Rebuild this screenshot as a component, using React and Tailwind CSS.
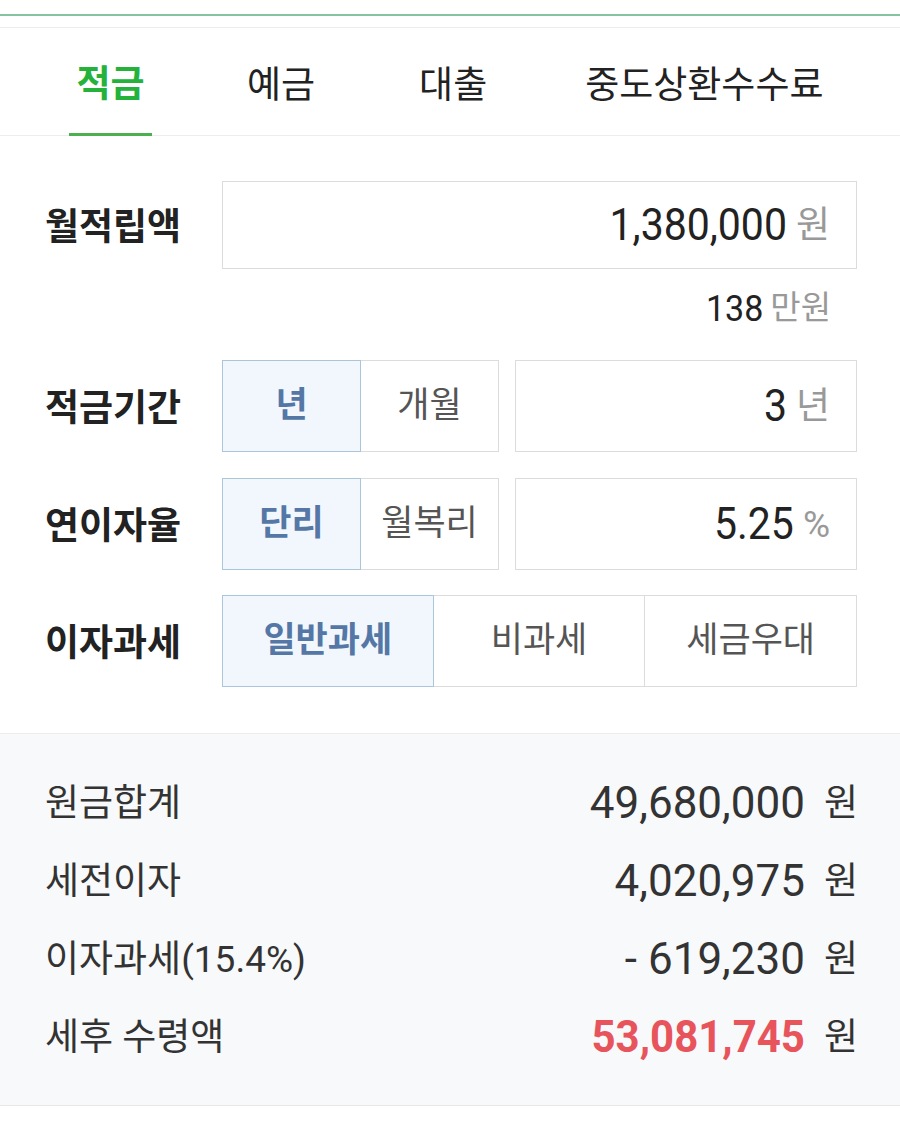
import React from "react";

const KR = { fontFamily: "Roboto, 'Noto Sans CJK KR', sans-serif" };

function Label({ children }) {
  return (
    <div className="w-[177px] shrink-0 pt-[4px] text-[37px] font-bold text-[#222] leading-none">
      {children}
    </div>
  );
}

function Toggle({ a, b }) {
  return (
    <div className="flex w-[277px] h-full">
      <div className="w-[139px] h-full flex items-center justify-center border border-[#a9c6da] bg-[#f1f7fd] text-[35px] font-bold text-[#5577a6]">
        {a}
      </div>
      <div className="flex-1 h-full flex items-center justify-center border border-l-0 border-[#dcdcdc] bg-white text-[35px] text-[#555]">
        {b}
      </div>
    </div>
  );
}

function ValueBox({ value, unit, className = "" }) {
  return (
    <div className={"h-full flex items-center justify-end border border-[#dcdcdc] bg-white pr-[26px] " + className}>
      <span className="inline-block text-[41px] text-[#222] leading-none scale-y-[1.1]">{value}</span>
      <span className="inline-block ml-[9px] text-[37px] text-[#999] leading-none">{unit}</span>
    </div>
  );
}

function ResultRow({ label, value, red }) {
  return (
    <div className="h-[78px] flex items-center justify-between">
      <span className="text-[37px] text-[#333] leading-none">{label}</span>
      <span className="flex items-center">
        <span
          className={
            "inline-block leading-none " +
            (red ? "text-[42px] text-[#e8545b] font-bold scale-y-[1.06]" : "text-[44px] text-[#333]")
          }
        >
          {value}
        </span>
        <span className="ml-[19px] text-[37px] text-[#333] leading-none">원</span>
      </span>
    </div>
  );
}

export default function App() {
  return (
    <div className="w-[900px] h-[1121px] bg-white overflow-hidden" style={KR}>
      <div className="h-[14px]" />
      <div className="h-[2px] bg-[#86c4a1]" />
      <div className="h-[11px]" />
      <div className="h-px bg-[#ececec]" />

      {/* Tabs */}
      <div className="h-[108px] flex items-stretch border-b border-[#ececec] pl-[69px]">
        <div className="w-[83px] flex items-center justify-center border-b-[3px] border-[#4caf50] -mb-px pt-[8px] text-[37px] font-bold text-[#25b23b]">
          적금
        </div>
        <div className="ml-[95px] flex items-center pt-[8px] text-[37px] text-[#222]">예금</div>
        <div className="ml-[104px] flex items-center pt-[8px] text-[37px] text-[#222]">대출</div>
        <div className="ml-[98px] flex items-center pt-[8px] text-[37px] text-[#222]">중도상환수수료</div>
      </div>

      {/* Form */}
      <div className="pt-[45px] pb-[46px] pl-[45px] pr-[43px] border-b border-[#ececec]">
        <div className="flex items-center h-[88px]">
          <Label>월적립액</Label>
          <ValueBox value="1,380,000" unit="원" className="flex-1" />
        </div>
        <div className="flex justify-end pt-[18px] pb-[31px] pr-[26px] h-[91px] items-start">
          <span className="inline-block text-[34px] leading-[42px] text-[#222] scale-y-[1.08]">138</span>
          <span className="ml-[7px] text-[33px] leading-[42px] text-[#999]">만원</span>
        </div>
        <div className="flex items-center h-[92px]">
          <Label>적금기간</Label>
          <Toggle a="년" b="개월" />
          <ValueBox value="3" unit="년" className="flex-1 ml-[16px]" />
        </div>
        <div className="flex items-center h-[92px] mt-[26px]">
          <Label>연이자율</Label>
          <Toggle a="단리" b="월복리" />
          <ValueBox value="5.25" unit="%" className="flex-1 ml-[16px]" />
        </div>
        <div className="flex items-center h-[92px] mt-[25px]">
          <Label>이자과세</Label>
          <div className="flex-1 h-full grid grid-cols-3">
            <div className="flex items-center justify-center border border-[#a9c6da] bg-[#f1f7fd] text-[35px] font-bold text-[#5577a6]">
              일반과세
            </div>
            <div className="flex items-center justify-center border border-l-0 border-[#dcdcdc] text-[35px] text-[#555]">
              비과세
            </div>
            <div className="flex items-center justify-center border border-l-0 border-[#dcdcdc] text-[35px] text-[#555]">
              세금우대
            </div>
          </div>
        </div>
      </div>

      {/* Results */}
      <div className="bg-[#f8f9fb] pt-[30px] pb-[29px] pl-[45px] pr-[42px] border-b border-[#e8e8e8]">
        <ResultRow label="원금합계" value="49,680,000" />
        <ResultRow label="세전이자" value="4,020,975" />
        <ResultRow label="이자과세(15.4%)" value="- 619,230" />
        <ResultRow label="세후 수령액" value="53,081,745" red />
      </div>
    </div>
  );
}
